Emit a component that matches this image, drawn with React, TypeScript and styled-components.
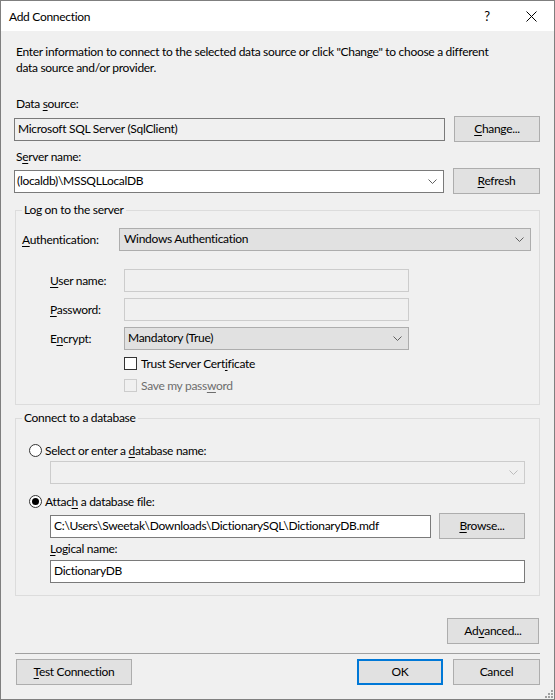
import React from 'react';
import styled, { createGlobalStyle } from 'styled-components';

const FONT = `"Lato", "Noto Sans", "DejaVu Sans", sans-serif`;

const Global = createGlobalStyle`
  html, body { margin: 0; padding: 0; background: #f0f0f0; }
  body { font-family: ${FONT}; font-size: 12px; letter-spacing: -0.3px; color: #000; }
  * { box-sizing: border-box; }
`;

const Window = styled.div`
  position: relative;
  width: 555px;
  height: 700px;
  border: 1px solid #7f7f7f;
  background: #f0f0f0;
  display: flex;
  flex-direction: column;
  overflow: hidden;
`;

const TitleBar = styled.div`
  height: 30px;
  background: #fff;
  display: flex;
  align-items: stretch;
  padding-left: 8px;
  padding-right: 1px;
`;

const Title = styled.div`
  flex: 1;
  display: flex;
  align-items: center;
  font-size: 12px;
`;

const CaptionButton = styled.div`
  width: 44px;
  display: flex;
  align-items: center;
  justify-content: center;
  font-size: 13px;
`;

const Body = styled.div`
  flex: 1;
  display: flex;
  flex-direction: column;
  padding: 0 14px 0 13px;
`;

const Description = styled.div`
  margin: 13px 0 0 2px;
  line-height: 16px;
`;

const Label = styled.div<{ $mt?: number; $ml?: number; $disabled?: boolean }>`
  line-height: 16px;
  margin-top: ${(p) => p.$mt ?? 0}px;
  margin-left: ${(p) => p.$ml ?? 2}px;
  color: ${(p) => (p.$disabled ? '#6d6d6d' : '#000')};
  white-space: nowrap;
`;

const Key = styled.span`
  text-decoration: underline;
  text-underline-offset: 2px;
  text-decoration-thickness: 1px;
`;

const Row = styled.div<{ $mt?: number; $ml?: number; $h?: number; $end?: boolean }>`
  display: flex;
  align-items: center;
  justify-content: ${(p) => (p.$end ? 'flex-end' : 'space-between')};
  height: ${(p) => p.$h ?? 26}px;
  margin-top: ${(p) => p.$mt ?? 0}px;
  margin-left: ${(p) => p.$ml ?? 0}px;
  padding-right: ${(p) => (p.$end ? 1 : 0)}px;
`;

type BoxKind = 'readonly' | 'white' | 'disabled' | 'combo';

const boxBg: Record<BoxKind, string> = {
  readonly: '#f0f0f0',
  white: '#ffffff',
  disabled: '#f0f0f0',
  combo: '#e1e1e1',
};
const boxBorder: Record<BoxKind, string> = {
  readonly: '#7a7a7a',
  white: '#7a7a7a',
  disabled: '#cccccc',
  combo: '#adadad',
};

const Box = styled.div<{ $w?: number; $kind: BoxKind; $pl?: number; $mt?: number; $ml?: number }>`
  width: ${(p) => (p.$w ? `${p.$w}px` : 'auto')};
  height: 23px;
  flex-shrink: 0;
  border: 1px solid ${(p) => boxBorder[p.$kind]};
  background: ${(p) => boxBg[p.$kind]};
  padding: 0 6px 1px ${(p) => p.$pl ?? 3}px;
  margin-top: ${(p) => p.$mt ?? 0}px;
  margin-left: ${(p) => p.$ml ?? 0}px;
  display: flex;
  align-items: center;
  line-height: 16px;
  white-space: nowrap;
  overflow: hidden;
`;

const BoxText = styled.span`
  flex: 1;
`;

const BoxFill = styled.div`
  flex: 1;
`;

const ChevronSlot = styled.span`
  display: flex;
  padding-top: 1px;
`;

const Button = styled.div<{ $w: number; $default?: boolean; $ml?: number }>`
  width: ${(p) => p.$w}px;
  height: 26px;
  flex-shrink: 0;
  margin-left: ${(p) => p.$ml ?? 0}px;
  border: ${(p) => (p.$default ? '2px solid #0078d7' : '1px solid #adadad')};
  background: #e1e1e1;
  padding-bottom: 1px;
  display: flex;
  align-items: center;
  justify-content: center;
  line-height: 16px;
  white-space: nowrap;
`;

const Group = styled.fieldset<{ $mt: number }>`
  margin: ${(p) => p.$mt}px 0 0 1px;
  padding: 0;
  border: 1px solid #dcdcdc;
  min-inline-size: 0;
`;

const Legend = styled.legend`
  margin-left: 6px;
  padding: 0 2px;
  line-height: 16px;
  font-size: 12px;
`;

const GroupInner = styled.div<{ $pad: string }>`
  padding: ${(p) => p.$pad};
  display: flex;
  flex-direction: column;
`;

const FieldRow = styled.div<{ $mt: number }>`
  display: grid;
  grid-template-columns: 74px 285px;
  align-items: center;
  margin-left: 28px;
  margin-top: ${(p) => p.$mt}px;
  height: 23px;
`;

const CheckRow = styled.div<{ $mt: number; $disabled?: boolean }>`
  display: flex;
  align-items: center;
  gap: 4px;
  height: 16px;
  margin-left: 102px;
  margin-top: ${(p) => p.$mt}px;
  color: ${(p) => (p.$disabled ? '#6d6d6d' : '#000')};
`;

const CheckBox = styled.span<{ $disabled?: boolean }>`
  width: 13px;
  height: 13px;
  border: 1px solid ${(p) => (p.$disabled ? '#cccccc' : '#333333')};
  background: ${(p) => (p.$disabled ? '#f0f0f0' : '#ffffff')};
`;

const RadioRow = styled.div<{ $mt: number }>`
  display: flex;
  align-items: center;
  gap: 3px;
  height: 16px;
  margin-top: ${(p) => p.$mt}px;
`;

const Radio = styled.span<{ $checked?: boolean }>`
  width: 13px;
  height: 13px;
  border-radius: 50%;
  border: 1px solid #333333;
  background: #fff;
  display: flex;
  align-items: center;
  justify-content: center;
  &::after {
    content: '';
    width: 7px;
    height: 7px;
    border-radius: 50%;
    background: ${(p) => (p.$checked ? '#000' : 'transparent')};
  }
`;

const Separator = styled.div`
  height: 1px;
  background: #a0a0a0;
  margin: 9px 0 0 1px;
`;

const BottomRow = styled.div`
  display: flex;
  align-items: center;
  height: 26px;
  margin: 5px 0 0 2px;
`;

const Spacer = styled.div`
  flex: 1;
`;

const Grip = styled.svg`
  position: absolute;
  right: 1px;
  bottom: 1px;
`;

const Chevron: React.FC<{ color?: string }> = ({ color = '#606060' }) => (
  <ChevronSlot>
    <svg width="9" height="5" viewBox="0 0 9 5">
      <polyline points="0.5,0.5 4.5,4.5 8.5,0.5" fill="none" stroke={color} strokeWidth="1" />
    </svg>
  </ChevronSlot>
);

export default function App() {
  return (
    <>
      <Global />
      <Window>
        <TitleBar>
          <Title>Add Connection</Title>
          <CaptionButton>?</CaptionButton>
          <CaptionButton>
            <svg width="11" height="11" viewBox="0 0 11 11">
              <path d="M0.5 0.5 L10.5 10.5 M10.5 0.5 L0.5 10.5" stroke="#000" strokeWidth="1" />
            </svg>
          </CaptionButton>
        </TitleBar>
        <Body>
          <Description>
            Enter information to connect to the selected data source or click "Change" to choose a different
            <br />
            data source and/or provider.
          </Description>

          <Label $mt={20}>
            Data <Key>s</Key>ource:
          </Label>
          <Row $mt={4}>
            <Box $w={431} $kind="readonly">
              <BoxText>Microsoft SQL Server (SqlClient)</BoxText>
            </Box>
            <Button $w={86}>
              <span>
                <Key>C</Key>hange...
              </span>
            </Button>
          </Row>

          <Label $mt={7}>
            S<Key>e</Key>rver name:
          </Label>
          <Row $mt={3}>
            <Box $w={430} $kind="white" $pl={2}>
              <BoxText>(localdb)\MSSQLLocalDB</BoxText>
              <Chevron />
            </Box>
            <Button $w={87}>
              <span>
                <Key>R</Key>efresh
              </span>
            </Button>
          </Row>

          <Group $mt={8}>
            <Legend>Log on to the server</Legend>
            <GroupInner $pad="10px 8px 11px 6px">
              <Row $h={23}>
                <Label $ml={0}>
                  <Key>A</Key>uthentication:
                </Label>
                <Box $w={412} $kind="combo" $pl={4}>
                  <BoxText>Windows Authentication</BoxText>
                  <Chevron />
                </Box>
              </Row>
              <FieldRow $mt={18}>
                <Label $ml={0}>
                  <Key>U</Key>ser name:
                </Label>
                <Box $kind="disabled" />
              </FieldRow>
              <FieldRow $mt={6}>
                <Label $ml={0}>
                  <Key>P</Key>assword:
                </Label>
                <Box $kind="disabled" />
              </FieldRow>
              <FieldRow $mt={6}>
                <Label $ml={0}>
                  E<Key>n</Key>crypt:
                </Label>
                <Box $kind="combo">
                  <BoxText>Mandatory (True)</BoxText>
                  <Chevron />
                </Box>
              </FieldRow>
              <CheckRow $mt={5}>
                <CheckBox />
                <span>
                  Trust Server Cert<Key>i</Key>ficate
                </span>
              </CheckRow>
              <CheckRow $mt={6} $disabled>
                <CheckBox $disabled />
                <span>
                  Save my pass<Key>w</Key>ord
                </span>
              </CheckRow>
            </GroupInner>
          </Group>

          <Group $mt={5}>
            <Legend>Connect to a database</Legend>
            <GroupInner $pad="16px 14px 12px 13px">
              <RadioRow $mt={0}>
                <Radio />
                <span>
                  Select or enter a <Key>d</Key>atabase name:
                </span>
              </RadioRow>
              <Box $kind="disabled" $mt={3} $ml={21}>
                <BoxFill />
                <Chevron color="#bcbcbc" />
              </Box>
              <RadioRow $mt={9}>
                <Radio $checked />
                <span>
                  Attac<Key>h</Key> a database file:
                </span>
              </RadioRow>
              <Row $mt={4} $ml={21}>
                <Box $w={381} $kind="white">
                  <BoxText>C:\Users\Sweetak\Downloads\DictionarySQL\DictionaryDB.mdf</BoxText>
                </Box>
                <Button $w={86}>
                  <span>
                    <Key>B</Key>rowse...
                  </span>
                </Button>
              </Row>
              <Label $mt={2} $ml={21}>
                <Key>L</Key>ogical name:
              </Label>
              <Box $kind="white" $mt={3} $ml={21}>
                <BoxText>DictionaryDB</BoxText>
              </Box>
            </GroupInner>
          </Group>

          <Row $mt={22} $end>
            <Button $w={92}>
              <span>
                Ad<Key>v</Key>anced...
              </span>
            </Button>
          </Row>

          <Separator />

          <BottomRow>
            <Button $w={116}>
              <span>
                <Key>T</Key>est Connection
              </span>
            </Button>
            <Spacer />
            <Button $w={86} $default>
              OK
            </Button>
            <Button $w={87} $ml={10}>
              Cancel
            </Button>
          </BottomRow>
        </Body>
        <Grip width="8" height="8" viewBox="0 0 8 8">
          {[
            [6, 0],
            [6, 3],
            [3, 3],
            [6, 6],
            [3, 6],
            [0, 6],
          ].map(([x, y]) => (
            <rect key={`${x}-${y}`} x={x} y={y} width="2" height="2" fill="#a0a0a0" />
          ))}
        </Grip>
      </Window>
    </>
  );
}
